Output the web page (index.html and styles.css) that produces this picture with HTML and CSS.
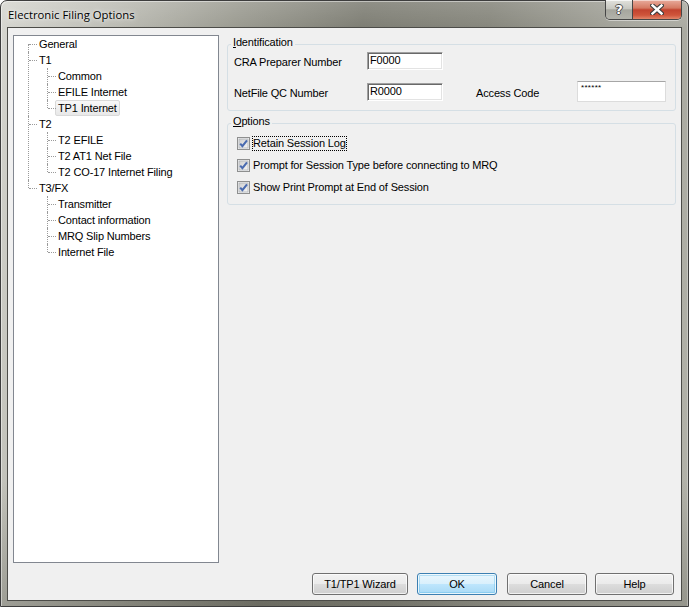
FILE: index.html
```html
<!DOCTYPE html>
<html lang="en">
<head>
    <meta charset="UTF-8">
    <meta name="viewport" content="width=device-width, initial-scale=1.0">
    <title>Electronic Filing Options</title>
    <link rel="stylesheet" href="styles.css">
</head>
<body>
    <div class="window">
        <div class="titlebar">
            <span class="title">Electronic Filing Options</span>
            <div class="caption-buttons">
                <span class="cap-btn help-btn">?</span>
                <span class="cap-btn close-btn">
                    <svg width="14" height="11" viewBox="0 0 14 11">
                        <path d="M2.5 1.5 L11.5 9.5 M11.5 1.5 L2.5 9.5" stroke="#3c3c3c" stroke-width="4.6" stroke-linecap="square"/>
                        <path d="M2.5 1.5 L11.5 9.5 M11.5 1.5 L2.5 9.5" stroke="#ffffff" stroke-width="2.4" stroke-linecap="square"/>
                    </svg>
                </span>
            </div>
        </div>
        <div class="client">
            <div class="main">
                <div class="tree">
                    <ul class="tree-root">
                        <li><span class="node">General</span></li>
                        <li><span class="node">T1</span>
                            <ul>
                                <li><span class="node">Common</span></li>
                                <li><span class="node">EFILE Internet</span></li>
                                <li><span class="node selected">TP1 Internet</span></li>
                            </ul>
                        </li>
                        <li><span class="node">T2</span>
                            <ul>
                                <li><span class="node">T2 EFILE</span></li>
                                <li><span class="node">T2 AT1 Net File</span></li>
                                <li><span class="node">T2 CO-17 Internet Filing</span></li>
                            </ul>
                        </li>
                        <li><span class="node">T3/FX</span>
                            <ul>
                                <li><span class="node">Transmitter</span></li>
                                <li><span class="node">Contact information</span></li>
                                <li><span class="node">MRQ Slip Numbers</span></li>
                                <li><span class="node">Internet File</span></li>
                            </ul>
                        </li>
                    </ul>
                </div>

                <div class="panel">
                    <fieldset class="group group-id">
                        <legend><u>I</u>dentification</legend>
                        <div class="id-grid">
                            <span class="field-label">CRA Preparer Number</span>
                            <div class="textbox">F0000</div>
                            <span class="field-label row-start">NetFile QC Number</span>
                            <div class="textbox">R0000</div>
                            <span class="field-label access-label">Access Code</span>
                            <div class="textbox flat">******</div>
                        </div>
                    </fieldset>

                    <fieldset class="group group-options">
                        <legend><u>O</u>ptions</legend>
                        <div class="check-row">
                            <span class="checkbox"></span>
                            <span class="check-label focused">Retain Session Log</span>
                        </div>
                        <div class="check-row">
                            <span class="checkbox"></span>
                            <span class="check-label">Prompt for Session Type before connecting to MRQ</span>
                        </div>
                        <div class="check-row">
                            <span class="checkbox"></span>
                            <span class="check-label">Show Print Prompt at End of Session</span>
                        </div>
                    </fieldset>
                </div>
            </div>

            <div class="buttons">
                <button class="btn btn-wizard">T1/TP1 Wizard</button>
                <button class="btn btn-ok">OK</button>
                <button class="btn btn-cancel">Cancel</button>
                <button class="btn btn-help">Help</button>
            </div>
        </div>
    </div>

    <script>
        // draw the same checked box into every checkbox
        const checkSvg =
            '<svg width="13" height="13" viewBox="0 0 13 13">' +
            '<defs><linearGradient id="cbg" x1="0" y1="0" x2="1" y2="1">' +
            '<stop offset="0" stop-color="#cfcfcf"/><stop offset="1" stop-color="#f6f6f6"/></linearGradient></defs>' +
            '<rect x="0.5" y="0.5" width="12" height="12" fill="#f4f4f4" stroke="#8e8f8f"/>' +
            '<rect x="2" y="2" width="9" height="9" fill="url(#cbg)" stroke="#b0b3b8" stroke-width="0.8"/>' +
            '<path d="M3.2 6.6 L5.4 9.2 L10 3.4" fill="none" stroke="#4a6bb0" stroke-width="2.1"/>' +
            '</svg>';
        document.querySelectorAll('.checkbox').forEach(function (box) {
            box.innerHTML = checkSvg;
        });
    </script>
</body>
</html>
```

FILE: styles.css
```css
html, body {
    margin: 0;
    padding: 0;
}
body {
    width: 689px;
    height: 607px;
    overflow: hidden;
    background-color: #ffffff;
    font-family: "Liberation Sans", Arial, sans-serif;
    font-size: 11px;
    letter-spacing: -0.15px;
    color: #000000;
}
.window {
    box-sizing: border-box;
    width: 689px;
    height: 607px;
    display: flex;
    flex-direction: column;
    padding: 0 6px 5px 6px;
    border: 1px solid #3d3d3d;
    border-radius: 7px 7px 0 0;
    background:
        linear-gradient(to bottom, rgba(255,255,255,0.15), rgba(0,0,0,0) 30px, rgba(0,0,0,0) 480px, rgba(60,60,50,0.25)),
        linear-gradient(100deg, #d6d6d0 0%, #bdbdb5 14%, #9a9a90 30%, #7c7c72 46%, #85857b 62%, #a5a59c 80%, #b4b4ab 100%);
    box-shadow: inset 1px 1px 0 rgba(255,255,255,0.45), inset -1px 0 0 rgba(255,255,255,0.3);
}
.titlebar {
    height: 26px;
    display: flex;
    justify-content: space-between;
    align-items: flex-start;
}
.title {
    padding: 6px 0 0 1px;
    font-family: "Open Sans", "Noto Sans", sans-serif;
    font-size: 11.3px;
    letter-spacing: 0;
    line-height: 16px;
    color: #000000;
    text-shadow: 0 0 6px rgba(255,255,255,0.9), 0 0 3px rgba(255,255,255,0.7);
}
.caption-buttons {
    display: flex;
    height: 19px;
    margin-top: -1px;
    border: 1px solid #464646;
    border-top: none;
    border-radius: 0 0 5px 5px;
    overflow: hidden;
    box-shadow: 0 1px 0 rgba(255,255,255,0.45);
}
.cap-btn {
    display: flex;
    justify-content: center;
    align-items: center;
}
.help-btn {
    width: 26px;
    border-right: 1px solid #464646;
    background: linear-gradient(#e2e2dd, #c8c8c1 45%, #a6a69e 52%, #b3b3ab 100%);
    box-shadow: inset 0 1px 0 rgba(255,255,255,0.7);
    font-family: "DejaVu Sans", sans-serif;
    font-weight: bold;
    font-size: 13px;
    letter-spacing: 0;
    color: #ffffff;
    text-shadow: -1px 0 #4a4a4a, 1px 0 #4a4a4a, 0 -1px #4a4a4a, 0 1px #4a4a4a;
}
.close-btn {
    width: 48px;
    background: linear-gradient(#e8ab9c, #d57a63 42%, #c2432f 52%, #cf553b 80%, #e2866a 100%);
    box-shadow: inset 0 1px 0 rgba(255,255,255,0.5);
}

.client {
    flex: 1;
    display: flex;
    flex-direction: column;
    padding: 7px 5px 5px 5px;
    border: 1px solid #4c4c48;
    background-color: #f0f0f0;
}
.main {
    flex: 1;
    display: flex;
}

/* tree view */
.tree {
    width: 204px;
    border: 1px solid #828790;
    background-color: #ffffff;
}
.tree ul {
    list-style: none;
    margin: 0;
    padding: 0 0 0 8px;
}
.tree .tree-root {
    padding-left: 14px;
}
.tree li {
    position: relative;
    padding-left: 11px;
    line-height: 16px;
}
.tree li::before {
    content: '';
    position: absolute;
    left: 0;
    top: 0;
    bottom: 0;
    border-left: 1px dotted #9a9a9a;
}
.tree li:last-child::before {
    bottom: auto;
    height: 8px;
}
.tree .tree-root > li:first-child::before {
    top: 8px;
}
.tree li::after {
    content: '';
    position: absolute;
    left: 1px;
    top: 8px;
    width: 8px;
    border-top: 1px dotted #9a9a9a;
}
.node {
    white-space: nowrap;
}
.node.selected {
    display: inline-block;
    margin-left: -3px;
    padding: 0 2px;
    height: 14px;
    line-height: 14px;
    border: 1px solid #d9d9d9;
    border-radius: 2px;
    background: linear-gradient(#f8f8f8, #e8e8e8);
    vertical-align: top;
}

/* right side */
.panel {
    flex: 1;
    margin-left: 8px;
    display: flex;
    flex-direction: column;
}
.group {
    margin: 0;
    padding: 0 6px 8px 6px;
    border: 1px solid #d5dfe5;
    border-radius: 3px;
}
.group legend {
    margin-left: -3px;
    padding: 0 2px 3px 2px;
    line-height: 13px;
}
.group-id {
    margin-top: 1px;
}
.group-options {
    margin-top: 4px;
    padding-top: 1px;
    padding-bottom: 6px;
}
.id-grid {
    display: grid;
    grid-template-columns: 133px 76px 33px 101px 89px;
    grid-template-rows: 18px 21px;
    row-gap: 11px;
    align-items: center;
}
.field-label {
    padding-top: 2px;
}
.row-start {
    grid-column: 1;
}
.access-label {
    grid-column: 4;
}
.textbox {
    box-sizing: border-box;
    height: 18px;
    padding: 0 2px;
    line-height: 15px;
    background-color: #ffffff;
    border-top: 1px solid #a0a0a0;
    border-left: 1px solid #a0a0a0;
    border-right: 1px solid #ffffff;
    border-bottom: 1px solid #ffffff;
    box-shadow: inset 1px 1px 0 #696969, inset -1px -1px 0 #e3e3e3;
}
.textbox.flat {
    height: 21px;
    padding: 0 3px;
    font-size: 8px;
    line-height: 12px;
    letter-spacing: 0.3px;
    border: 1px solid #dcdcdc;
    border-top-color: #a6a6a6;
    box-shadow: none;
}
.check-row {
    display: flex;
    align-items: center;
    height: 22px;
    margin-left: 3px;
}
.checkbox {
    width: 13px;
    height: 13px;
    display: flex;
}
.check-label {
    margin-left: 3px;
    line-height: 12px;
    white-space: nowrap;
}
.check-label.focused {
    margin-left: 2px;
    border: 1px dotted #000000;
    padding-bottom: 1px;
}

/* dialog buttons */
.buttons {
    display: flex;
    justify-content: flex-end;
    margin-top: 10px;
    padding-right: 2px;
}
.btn {
    box-sizing: border-box;
    height: 22px;
    margin: 0;
    padding: 0;
    font-family: "Liberation Sans", Arial, sans-serif;
    font-size: 11px;
    letter-spacing: -0.15px;
    color: #000000;
    border: 1px solid #707070;
    border-radius: 3px;
    background: linear-gradient(#f2f2f2, #ebebeb 49%, #dddddd 50%, #cfcfcf);
    box-shadow: inset 0 0 0 1px rgba(255,255,255,0.7);
}
.btn-wizard {
    width: 96px;
}
.btn-ok {
    width: 80px;
    margin-left: 9px;
    border-color: #3c7fb1;
    background: linear-gradient(#eaf6fd, #d9f0fc 49%, #bee6fd 50%, #a7d9f5);
    box-shadow: inset 0 0 0 1px rgba(255,255,255,0.8), inset 0 0 0 2px rgba(80,180,230,0.35);
}
.btn-cancel {
    width: 80px;
    margin-left: 10px;
}
.btn-help {
    width: 79px;
    margin-left: 8px;
}
```
